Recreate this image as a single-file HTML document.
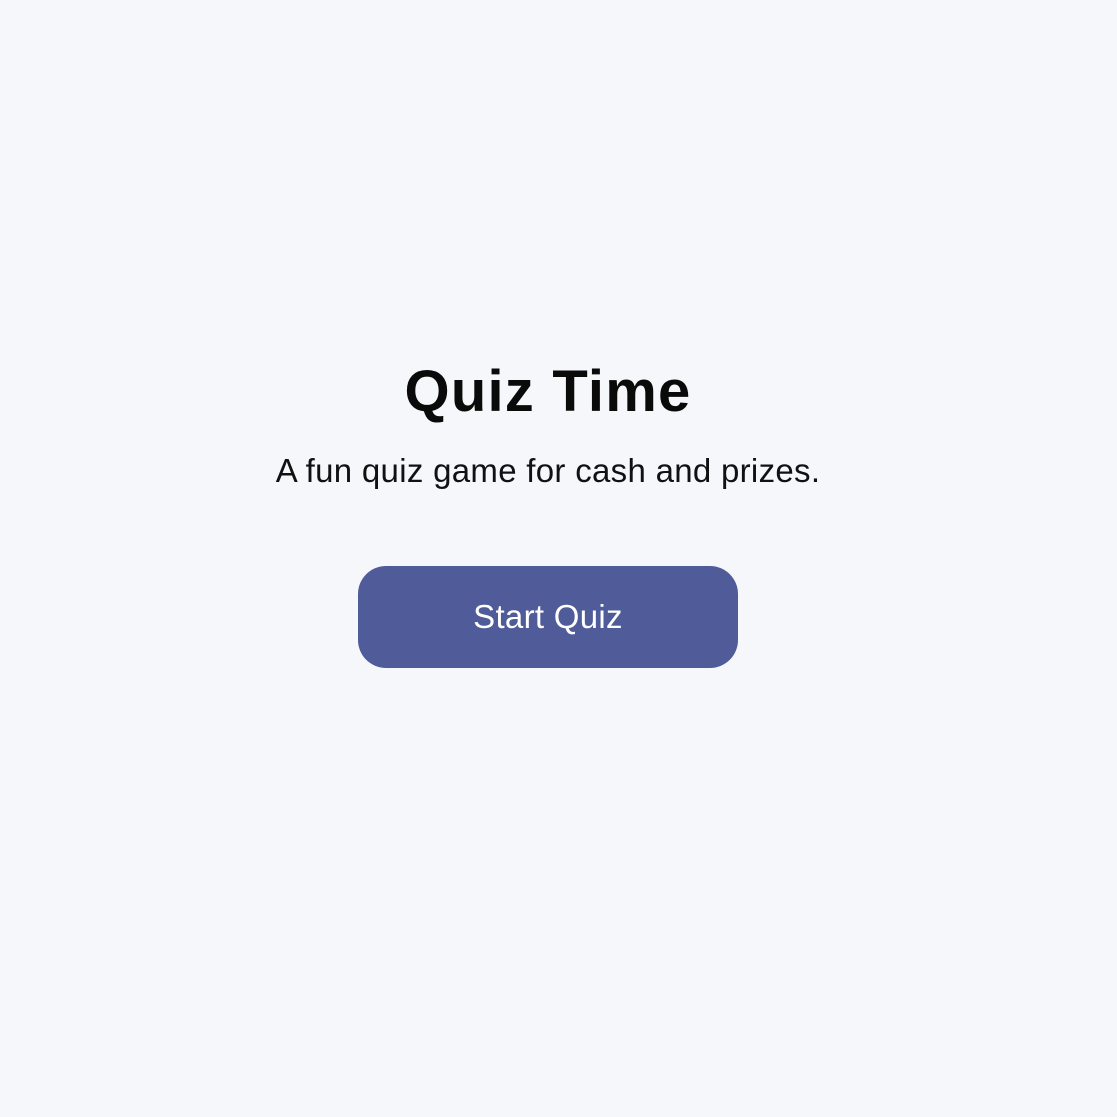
<!DOCTYPE html>
<html><head><meta charset="utf-8"><style>
html,body{margin:0;padding:0;width:1117px;height:1117px;background:#f6f7fb;font-family:"Liberation Sans",sans-serif;overflow:hidden}
h1{position:absolute;left:0;width:1096px;top:356px;margin:0;text-align:center;font-size:58px;font-weight:bold;color:#0a0a0a;letter-spacing:1.2px;line-height:72px}
p{position:absolute;left:0;width:1096px;top:449px;margin:0;text-align:center;font-size:33px;letter-spacing:0.3px;color:#111;line-height:44px}
.btn{position:absolute;left:358px;top:566px;width:380px;height:102px;border-radius:28px;background:#505b9a;color:#fff;font-size:33px;line-height:102px;text-align:center;letter-spacing:0.3px}
</style></head><body>
<h1>Quiz Time</h1>
<p>A fun quiz game for cash and prizes.</p>
<div class="btn">Start Quiz</div>
</body></html>
